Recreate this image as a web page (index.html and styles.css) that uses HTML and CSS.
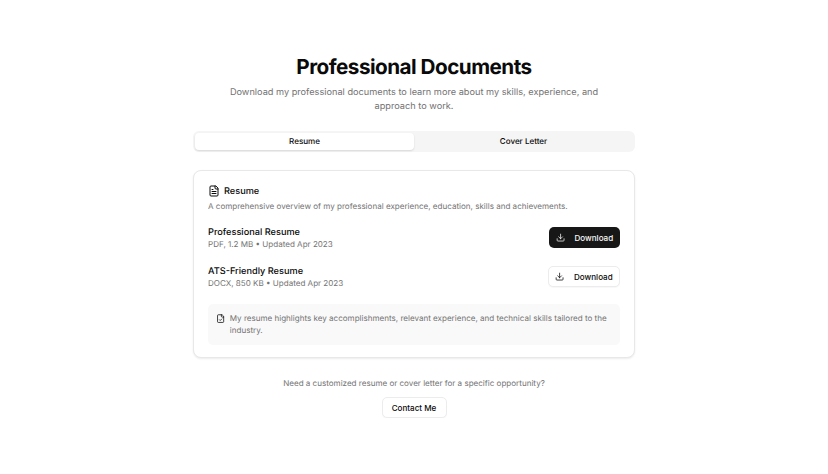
FILE: index.html
```html
<!DOCTYPE html>
<html lang="en">
<head>
<meta charset="utf-8">
<title>Professional Documents</title>
<link rel="stylesheet" href="styles.css">
</head>
<body>
<main class="page">
  <h1 class="title">Professional Documents</h1>
  <p class="lead">Download my professional documents to learn more about my skills, experience, and approach to work.</p>
  <div class="tabs">
    <div class="tab active">Resume</div>
    <div class="tab">Cover Letter</div>
  </div>
  <section class="card">
    <div class="card-head">
      <svg class="icon-lg" viewBox="0 0 24 24" fill="none" stroke="currentColor" stroke-width="2" stroke-linecap="round" stroke-linejoin="round"><path d="M15 2H6a2 2 0 0 0-2 2v16a2 2 0 0 0 2 2h12a2 2 0 0 0 2-2V7Z"/><path d="M14 2v4a2 2 0 0 0 2 2h4"/><path d="M10 9H8"/><path d="M16 13H8"/><path d="M16 17H8"/></svg>
      <h2 class="card-title">Resume</h2>
    </div>
    <p class="card-desc">A comprehensive overview of my professional experience, education, skills and achievements.</p>
    <div class="doc">
      <div>
        <div class="doc-name">Professional Resume</div>
        <div class="doc-meta">PDF, 1.2 MB • Updated Apr 2023</div>
      </div>
      <button class="btn btn-dark"><svg class="icon" viewBox="0 0 24 24" fill="none" stroke="currentColor" stroke-width="2" stroke-linecap="round" stroke-linejoin="round"><path d="M21 15v4a2 2 0 0 1-2 2H5a2 2 0 0 1-2-2v-4"/><path d="m7 10 5 5 5-5"/><path d="M12 15V3"/></svg>Download</button>
    </div>
    <div class="doc">
      <div>
        <div class="doc-name">ATS-Friendly Resume</div>
        <div class="doc-meta">DOCX, 850 KB • Updated Apr 2023</div>
      </div>
      <button class="btn btn-light"><svg class="icon" viewBox="0 0 24 24" fill="none" stroke="currentColor" stroke-width="2" stroke-linecap="round" stroke-linejoin="round"><path d="M21 15v4a2 2 0 0 1-2 2H5a2 2 0 0 1-2-2v-4"/><path d="m7 10 5 5 5-5"/><path d="M12 15V3"/></svg>Download</button>
    </div>
    <div class="note">
      <svg class="icon-note" viewBox="0 0 24 24" fill="none" stroke="currentColor" stroke-width="2" stroke-linecap="round" stroke-linejoin="round"><path d="M15 2H6a2 2 0 0 0-2 2v16a2 2 0 0 0 2 2h12a2 2 0 0 0 2-2V7Z"/><path d="M14 2v4a2 2 0 0 0 2 2h4"/><path d="m9 15 2 2 4-4"/></svg>
      <p>My resume highlights key accomplishments, relevant experience, and technical skills tailored to the industry.</p>
    </div>
  </section>
  <p class="ask">Need a customized resume or cover letter for a specific opportunity?</p>
  <button class="btn btn-light btn-contact">Contact Me</button>
</main>
</body>
</html>
```
FILE: styles.css
```css
* { box-sizing: border-box; }
html, body { margin: 0; background: #fff; }
body { font-family: Inter, "Liberation Sans", sans-serif; color: #0a0a0a; text-rendering: geometricPrecision; }
.page { width: 442px; margin: 0 auto; padding-top: 53px; display: flex; flex-direction: column; align-items: center; }
.title { margin: 0; font-size: 20.7px; line-height: 28px; font-weight: 700; letter-spacing: -0.52px; }
.lead { margin: 5px 0 0; width: 386px; text-align: center; font-size: 9.2px; line-height: 14px; color: #737373; }
.tabs { margin-top: 17px; width: 100%; height: 21px; padding: 2px; display: grid; grid-template-columns: 1fr 1fr; background: #f5f5f5; border-radius: 6px; }
.tab { display: flex; align-items: center; justify-content: center; font-size: 8.05px; font-weight: 500; border-radius: 4px; padding-bottom: 1px; }
.tab.active { background: #fff; box-shadow: 0 1px 2px rgba(0,0,0,.12); }
.card { margin-top: 18px; width: 100%; padding: 13.5px 14px 12px; border: 1px solid #e8e8e8; border-radius: 8px; box-shadow: 0 1px 2px rgba(0,0,0,.08); background: #fff; }
.card-head { display: flex; align-items: center; gap: 4px; height: 13px; }
.icon-lg { width: 12px; height: 12px; flex: none; }
.card-title { margin: 0; font-size: 9.2px; font-weight: 500; line-height: 13px; }
.card-desc { margin: 2px 0 0; font-size: 8.05px; line-height: 12px; color: #737373; }
.doc { margin-top: 15.5px; display: flex; align-items: center; justify-content: space-between; }
.doc + .doc { margin-top: 16px; }
.doc-name { font-size: 9.2px; font-weight: 500; line-height: 11px; }
.doc-meta { font-size: 8.05px; line-height: 12px; color: #737373; }
.btn { display: inline-flex; align-items: center; justify-content: center; gap: 9.5px; font: 500 8.05px Inter, "Liberation Sans", sans-serif; white-space: nowrap; border-radius: 5px; height: 21px; padding: 0; }
.doc .btn { margin-bottom: 2px; }
.btn-dark { width: 71px; background: #171717; color: #fafafa; border: 0; }
.btn-light { width: 72px; background: #fff; color: #0a0a0a; border: 1px solid #ececec; box-shadow: 0 1px 1px rgba(0,0,0,.03); }
.btn-contact { margin-top: 8px; width: 65px; }
.icon { width: 9.2px; height: 9.2px; flex: none; }
.note { margin-top: 15px; display: flex; gap: 4.6px; padding: 9px 8px; height: 41px; background: #f9f9f9; border-radius: 5px; }
.icon-note { width: 9.2px; height: 9.2px; flex: none; margin-top: 1px; }
.note p { margin: 0; font-size: 8.05px; line-height: 11.5px; color: #737373; }
.ask { margin: 19px 0 0; font-size: 8.05px; line-height: 12px; color: #737373; }
```
